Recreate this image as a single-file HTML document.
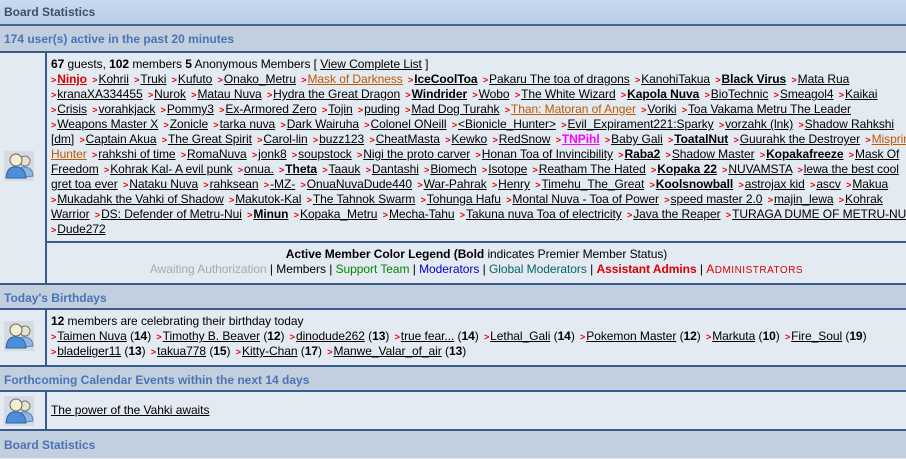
<!DOCTYPE html>
<html><head><meta charset="utf-8"><style>
*{margin:0;padding:0;box-sizing:border-box}
body{width:906px;height:458px;overflow:hidden;background:#e4eaf2;font-family:"Liberation Sans",Arial,sans-serif;font-size:12px;color:#000;position:relative}
.h{position:absolute;left:0;width:906px;font-weight:bold;font-size:12px;padding-left:4px}
.top{top:0;height:26px;line-height:24px;background:linear-gradient(#c8daf0,#b9cde8);color:#3d4e6c;border-bottom:2px solid #4a6694}
.sub{background:#c2cfdf;color:#4a74b6;border-bottom:2px solid #3a5a90}
.left{position:absolute;left:0;width:47px;border-right:2px solid #3a5a90}
.ln{position:absolute;left:51px;white-space:nowrap;line-height:15px;height:15px;letter-spacing:-0.05px}
a{color:#000;text-decoration:underline}
i{font-style:normal;color:#e00;font-size:9px;font-weight:bold;margin:0 1px 0 2px}
b a{font-weight:bold}
</style></head><body>
<div class="h top">Board Statistics</div>
<div class="h sub" style="top:26px;height:27px;line-height:26px">174 user(s) active in the past 20 minutes</div>
<div class="left" style="top:53px;height:230px"></div>
<svg style="position:absolute;left:4px;top:151px" width="30" height="30" viewBox="0 0 30 30"><rect width="30" height="30" fill="#d5dbe2"/><circle cx="21" cy="10" r="5" fill="#e8e4c8" stroke="#777"/><path d="M12 27 Q14 15 21 16 Q29 17 29 25 Z" fill="#8fb6e0" stroke="#5a86b8"/><circle cx="12" cy="9" r="6" fill="#f3efd0" stroke="#666"/><path d="M2 27 Q3 15 12 16 Q21 16 22 27 Z" fill="#4d8ed8" stroke="#2f62a0"/></svg>
<div class="ln" style="top:57px"><b>67</b> guests, <b>102</b> members <b>5</b> Anonymous Members [ <a>View Complete List</a> ]</div>
<div class="ln" style="top:72px"><i style="margin-left:0">&gt;</i><b><a style="color:#d00">Ninjo</a></b> <i>&gt;</i><a>Kohrii</a> <i>&gt;</i><a>Truki</a> <i>&gt;</i><a>Kufuto</a> <i>&gt;</i><a>Onako_Metru</a> <i>&gt;</i><a style="color:#c05800">Mask of Darkness</a> <i>&gt;</i><b><a>IceCoolToa</a></b> <i>&gt;</i><a>Pakaru The toa of dragons</a> <i>&gt;</i><a>KanohiTakua</a> <i>&gt;</i><b><a>Black Virus</a></b> <i>&gt;</i><a>Mata Rua</a></div>
<div class="ln" style="top:87px"><i style="margin-left:0">&gt;</i><a>kranaXA334455</a> <i>&gt;</i><a>Nurok</a> <i>&gt;</i><a>Matau Nuva</a> <i>&gt;</i><a>Hydra the Great Dragon</a> <i>&gt;</i><b><a>Windrider</a></b> <i>&gt;</i><a>Wobo</a> <i>&gt;</i><a>The White Wizard</a> <i>&gt;</i><b><a>Kapola Nuva</a></b> <i>&gt;</i><a>BioTechnic</a> <i>&gt;</i><a>Smeagol4</a> <i>&gt;</i><a>Kaikai</a></div>
<div class="ln" style="top:102px"><i style="margin-left:0">&gt;</i><a>Crisis</a> <i>&gt;</i><a>vorahkjack</a> <i>&gt;</i><a>Pommy3</a> <i>&gt;</i><a>Ex-Armored Zero</a> <i>&gt;</i><a>Tojin</a> <i>&gt;</i><a>puding</a> <i>&gt;</i><a>Mad Dog Turahk</a> <i>&gt;</i><a style="color:#c05800">Than: Matoran of Anger</a> <i>&gt;</i><a>Voriki</a> <i>&gt;</i><a>Toa Vakama Metru The Leader</a></div>
<div class="ln" style="top:117px"><i style="margin-left:0">&gt;</i><a>Weapons Master X</a> <i>&gt;</i><a>Zonicle</a> <i>&gt;</i><a>tarka nuva</a> <i>&gt;</i><a>Dark Wairuha</a> <i>&gt;</i><a>Colonel ONeill</a> <i>&gt;</i><a>&lt;Bionicle_Hunter&gt;</a> <i>&gt;</i><a>Evil_Expirament221:Sparky</a> <i>&gt;</i><a>vorzahk (lnk)</a> <i>&gt;</i><a>Shadow Rahkshi</a></div>
<div class="ln" style="top:132px"><a>[dm]</a> <i>&gt;</i><a>Captain Akua</a> <i>&gt;</i><a>The Great Spirit</a> <i>&gt;</i><a>Carol-lin</a> <i>&gt;</i><a>buzz123</a> <i>&gt;</i><a>CheatMasta</a> <i>&gt;</i><a>Kewko</a> <i>&gt;</i><a>RedSnow</a> <i>&gt;</i><b><a style="color:#f0f">TNPihl</a></b> <i>&gt;</i><a>Baby Gali</a> <i>&gt;</i><b><a>ToatalNut</a></b> <i>&gt;</i><a>Guurahk the Destroyer</a> <i>&gt;</i><a style="color:#c05800">Misprint</a></div>
<div class="ln" style="top:147px"><a style="color:#c05800">Hunter</a> <i>&gt;</i><a>rahkshi of time</a> <i>&gt;</i><a>RomaNuva</a> <i>&gt;</i><a>jonk8</a> <i>&gt;</i><a>soupstock</a> <i>&gt;</i><a>Nigi the proto carver</a> <i>&gt;</i><a>Honan Toa of Invincibility</a> <i>&gt;</i><b><a>Raba2</a></b> <i>&gt;</i><a>Shadow Master</a> <i>&gt;</i><b><a>Kopakafreeze</a></b> <i>&gt;</i><a>Mask Of</a></div>
<div class="ln" style="top:162px"><a>Freedom</a> <i>&gt;</i><a>Kohrak Kal- A evil punk</a> <i>&gt;</i><a>onua.</a> <i>&gt;</i><b><a>Theta</a></b> <i>&gt;</i><a>Taauk</a> <i>&gt;</i><a>Dantashi</a> <i>&gt;</i><a>Biomech</a> <i>&gt;</i><a>Isotope</a> <i>&gt;</i><a>Reatham The Hated</a> <i>&gt;</i><b><a>Kopaka 22</a></b> <i>&gt;</i><a>NUVAMSTA</a> <i>&gt;</i><a>lewa the best cool</a></div>
<div class="ln" style="top:177px"><a>gret toa ever</a> <i>&gt;</i><a>Nataku Nuva</a> <i>&gt;</i><a>rahksean</a> <i>&gt;</i><a>-MZ-</a> <i>&gt;</i><a>OnuaNuvaDude440</a> <i>&gt;</i><a>War-Pahrak</a> <i>&gt;</i><a>Henry</a> <i>&gt;</i><a>Timehu_The_Great</a> <i>&gt;</i><b><a>Koolsnowball</a></b> <i>&gt;</i><a>astrojax kid</a> <i>&gt;</i><a>ascv</a> <i>&gt;</i><a>Makua</a></div>
<div class="ln" style="top:192px"><i style="margin-left:0">&gt;</i><a>Mukadahk the Vahki of Shadow</a> <i>&gt;</i><a>Makutok-Kal</a> <i>&gt;</i><a>The Tahnok Swarm</a> <i>&gt;</i><a>Tohunga Hafu</a> <i>&gt;</i><a>Montal Nuva - Toa of Power</a> <i>&gt;</i><a>speed master 2.0</a> <i>&gt;</i><a>majin_lewa</a> <i>&gt;</i><a>Kohrak</a></div>
<div class="ln" style="top:207px"><a>Warrior</a> <i>&gt;</i><a>DS: Defender of Metru-Nui</a> <i>&gt;</i><b><a>Minun</a></b> <i>&gt;</i><a>Kopaka_Metru</a> <i>&gt;</i><a>Mecha-Tahu</a> <i>&gt;</i><a>Takuna nuva Toa of electricity</a> <i>&gt;</i><a>Java the Reaper</a> <i>&gt;</i><a>TURAGA DUME OF METRU-NUI</a></div>
<div class="ln" style="top:222px"><i style="margin-left:0">&gt;</i><a>Dude272</a></div>
<div style="position:absolute;left:47px;top:241px;width:859px;border-top:2px solid #3a5a90"></div>
<div style="position:absolute;left:47px;top:247px;width:859px;text-align:center;line-height:15px;letter-spacing:-0.05px"><b>Active Member Color Legend (Bold</b> indicates Premier Member Status)<br><span style="color:#aaa">Awaiting Authorization</span> | Members | <span style="color:#080">Support Team</span> | <span style="color:#00c">Moderators</span> | <span style="color:#066">Global Moderators</span> | <b style="color:#d00">Assistant Admins</b> | <span style="color:#d00;font-size:10px;letter-spacing:.5px"><span style="font-size:12px">A</span>DMINISTRATORS</span></div>
<div class="h sub" style="top:283px;height:27px;line-height:26px;border-top:2px solid #3a5a90">Today's Birthdays</div>
<div class="left" style="top:310px;height:55px"></div>
<svg style="position:absolute;left:4px;top:321px" width="30" height="30" viewBox="0 0 30 30"><rect width="30" height="30" fill="#d5dbe2"/><circle cx="21" cy="10" r="5" fill="#e8e4c8" stroke="#777"/><path d="M12 27 Q14 15 21 16 Q29 17 29 25 Z" fill="#8fb6e0" stroke="#5a86b8"/><circle cx="12" cy="9" r="6" fill="#f3efd0" stroke="#666"/><path d="M2 27 Q3 15 12 16 Q21 16 22 27 Z" fill="#4d8ed8" stroke="#2f62a0"/></svg>
<div class="ln" style="top:314px"><b>12</b> members are celebrating their birthday today</div>
<div class="ln" style="top:329px"><i style="margin-left:0">&gt;</i><a>Taimen Nuva</a> (<b>14</b>) <i>&gt;</i><a>Timothy B. Beaver</a> (<b>12</b>) <i>&gt;</i><a>dinodude262</a> (<b>13</b>) <i>&gt;</i><a>true fear...</a> (<b>14</b>) <i>&gt;</i><a>Lethal_Gali</a> (<b>14</b>) <i>&gt;</i><a>Pokemon Master</a> (<b>12</b>) <i>&gt;</i><a>Markuta</a> (<b>10</b>) <i>&gt;</i><a>Fire_Soul</a> (<b>19</b>)</div>
<div class="ln" style="top:344px"><i style="margin-left:0">&gt;</i><a>bladeliger11</a> (<b>13</b>) <i>&gt;</i><a>takua778</a> (<b>15</b>) <i>&gt;</i><a>Kitty-Chan</a> (<b>17</b>) <i>&gt;</i><a>Manwe_Valar_of_air</a> (<b>13</b>)</div>
<div class="h sub" style="top:365px;height:27px;line-height:26px;border-top:2px solid #3a5a90">Forthcoming Calendar Events within the next 14 days</div>
<div class="left" style="top:392px;height:38px"></div>
<svg style="position:absolute;left:4px;top:396px" width="30" height="30" viewBox="0 0 30 30"><rect width="30" height="30" fill="#d5dbe2"/><circle cx="21" cy="10" r="5" fill="#e8e4c8" stroke="#777"/><path d="M12 27 Q14 15 21 16 Q29 17 29 25 Z" fill="#8fb6e0" stroke="#5a86b8"/><circle cx="12" cy="9" r="6" fill="#f3efd0" stroke="#666"/><path d="M2 27 Q3 15 12 16 Q21 16 22 27 Z" fill="#4d8ed8" stroke="#2f62a0"/></svg>
<div class="ln" style="top:403px"><a>The power of the Vahki awaits</a></div>
<div class="h sub" style="top:429px;height:29px;line-height:28px;border-top:2px solid #3a5a90;border-bottom:none">Board Statistics</div>
</body></html>
